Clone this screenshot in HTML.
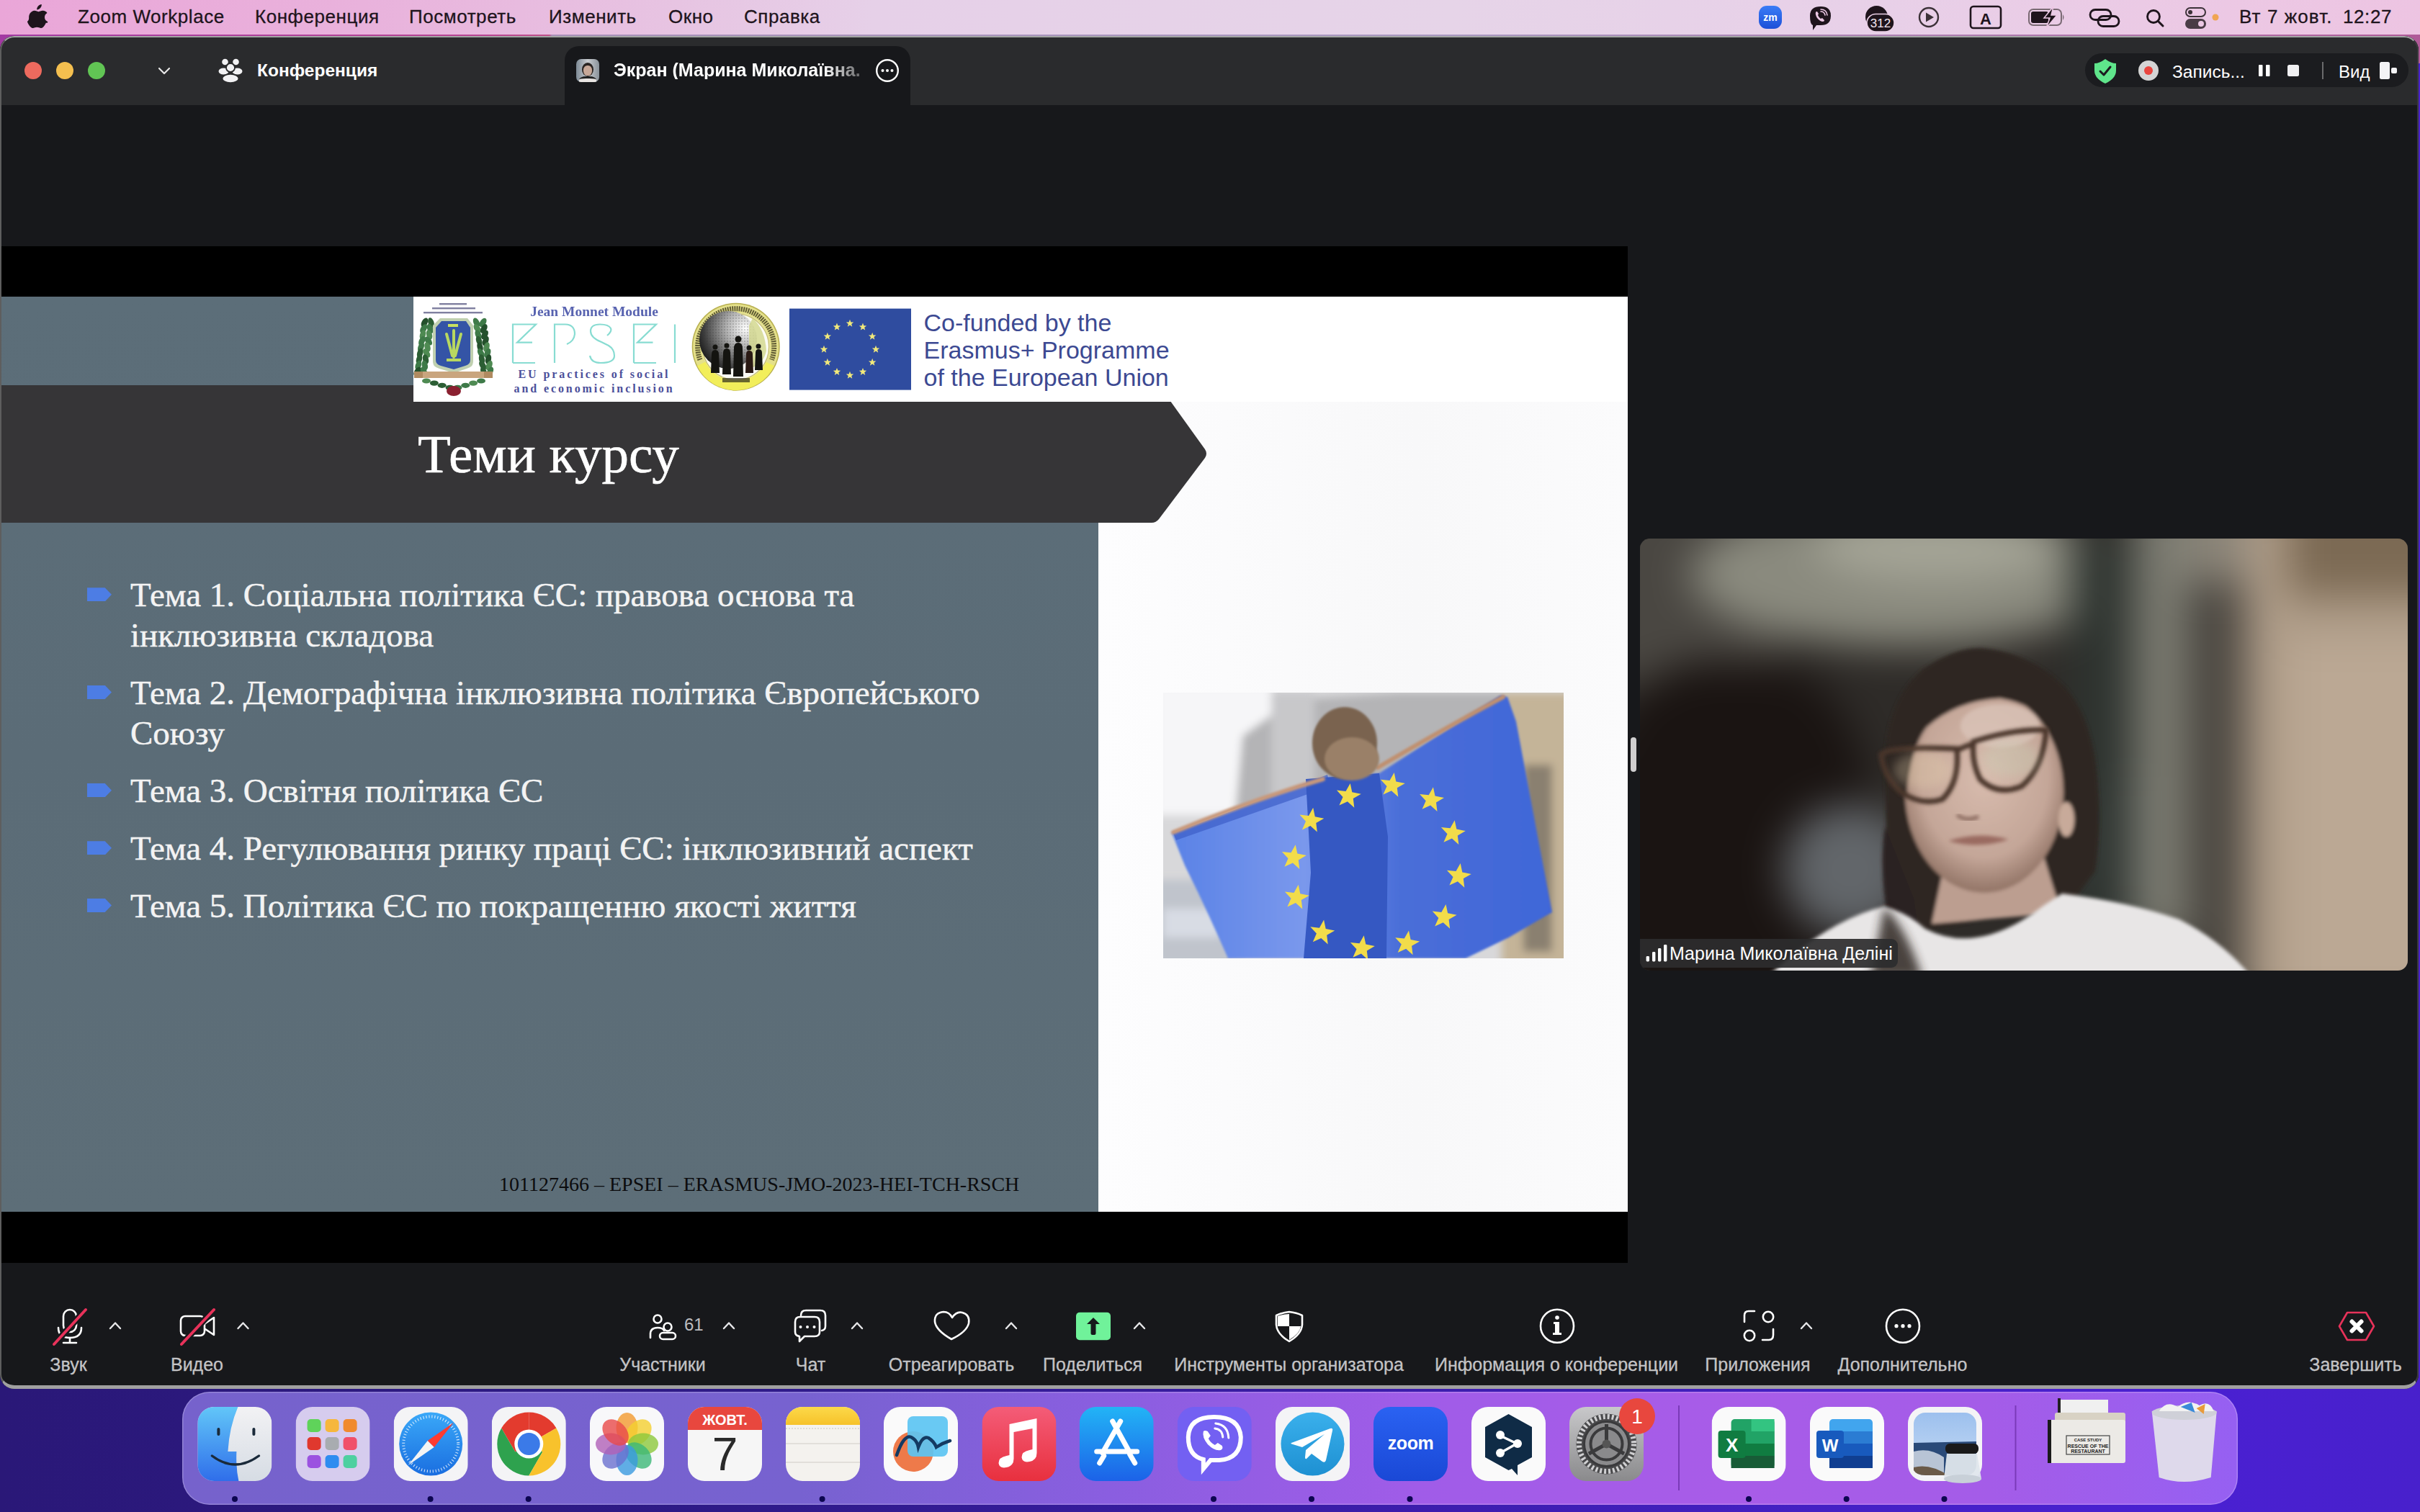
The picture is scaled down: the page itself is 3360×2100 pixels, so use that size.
<!DOCTYPE html>
<html><head><meta charset="utf-8">
<style>
*{box-sizing:border-box;margin:0;padding:0}
html,body{width:3360px;height:2100px;overflow:hidden}
body{position:relative;font-family:"Liberation Sans",sans-serif;
background:linear-gradient(90deg,#2a1878 0%,#2e1a88 30%,#3a1ca8 55%,#4420c4 75%,#4a20d2 90%,#4820cc 100%)}
.a{position:absolute}
svg{position:absolute;overflow:visible}
#menubar{left:0;top:0;width:3360px;height:48px;background:linear-gradient(90deg,#eaa6d8 0%,#e9b2dc 15%,#e7c4e2 28%,#e6d0e8 36%,#e6d4e8 60%,#e8d0e8 78%,#ecc8e4 92%,#edc4e2 100%)}
#mstrip{left:0;top:48px;width:3360px;height:40px;background:linear-gradient(90deg,#a23aa2 0%,#b84492 20%,#c0508a 22.7%,#a890b8 22.8%,#a898c0 60%,#b070a8 90%,#b05a98 100%)}
.mi{position:absolute;top:10px;font-size:26px;line-height:26px;color:#1e141c;letter-spacing:0.55px;white-space:nowrap;-webkit-text-stroke:0.3px #1e141c}
#win{left:0;top:50px;width:3358px;height:1879px;border-radius:20px;background:#17181b;overflow:hidden}
#winb{left:0;top:50px;width:3358px;height:1879px;border-radius:20px;border:2px solid #a3a5a4;border-left-color:#5e5e5e;border-right-color:#3a3a3c;border-bottom:5px solid #a0a0a0;pointer-events:none}
#tabbar{left:0;top:0;width:3358px;height:96px;background:#2a2b2d}
.tl{position:absolute;font-size:25px;line-height:25px;color:#fff;font-weight:700;white-space:nowrap}
.lbl{position:absolute;top:1883px;width:400px;margin-left:-200px;text-align:center;font-size:25px;line-height:25px;color:#c3c3c5;white-space:nowrap;-webkit-text-stroke:0.3px #c3c3c5}
.chev{position:absolute}
#slide{left:0;top:412px;width:2260px;height:1271px;background:#fbfbfc;overflow:hidden}
.ser{font-family:"Liberation Serif",serif;position:absolute;white-space:nowrap}
.bt{font-size:47px;line-height:56px;color:#f3f3f3;-webkit-text-stroke:0.5px #f3f3f3}
.bul{position:absolute;left:120.6px;width:34.4px;height:19.2px;background:#4d7de4;clip-path:polygon(0 0,73% 0,100% 50%,73% 100%,0 100%)}
.dockic{position:absolute;top:1954px;width:103px;height:103px;border-radius:23px;overflow:hidden}
.dot{position:absolute;top:2078px;width:8px;height:8px;border-radius:50%;background:#0c0650}
</style></head>
<body>
<!-- MENU BAR -->
<div id="menubar" class="a"></div>
<div id="mstrip" class="a"></div>
<svg style="left:40px;top:6px" width="27" height="33" viewBox="0 0 170 210"><path fill="#1e141c" d="M150.4 164.6c-3.1 7.2-6.8 13.8-11.1 19.9-5.8 8.4-10.6 14.2-14.3 17.4-5.7 5.3-11.9 8-18.5 8.1-4.7 0-10.4-1.3-17.1-4.1-6.7-2.7-12.8-4.1-18.5-4.1-5.9 0-12.2 1.4-19 4.1-6.8 2.8-12.3 4.2-16.4 4.3-6.4.3-12.7-2.5-19-8.4-4-3.5-9.1-9.5-15.1-18-6.5-9.1-11.8-19.7-16-31.8C1.6 139 0 127.1 0 115.6c0-13.2 2.9-24.6 8.6-34.1 4.5-7.7 10.5-13.8 18-18.2 7.5-4.5 15.6-6.7 24.3-6.9 4.8 0 11 1.5 18.8 4.4 7.8 2.9 12.7 4.4 14.9 4.4 1.6 0 7.2-1.7 16.6-5.2 8.9-3.2 16.4-4.5 22.6-4 16.7 1.3 29.3 7.9 37.6 19.8-15 9.1-22.4 21.8-22.2 38.1.1 12.7 4.8 23.3 13.9 31.6 4.1 3.9 8.7 6.9 13.8 9.1-1.1 3.2-2.3 6.3-3.5 9.3zM112.1 4c0 9.9-3.6 19.2-10.9 27.7-8.7 10.2-19.3 16.1-30.8 15.2-.1-1.2-.2-2.4-.2-3.7 0-9.5 4.1-19.7 11.5-28 3.7-4.2 8.3-7.7 14-10.6C101.4 1.8 106.7.3 111.7 0c.1 1.3.2 2.7.2 4z"/></svg>
<div class="mi" style="left:108px">Zoom Workplace</div>
<div class="mi" style="left:354px">Конференция</div>
<div class="mi" style="left:568px">Посмотреть</div>
<div class="mi" style="left:762px">Изменить</div>
<div class="mi" style="left:928px">Окно</div>
<div class="mi" style="left:1033px">Справка</div>
<div class="mi" style="left:3109px;letter-spacing:1.1px">Вт 7 жовт.</div>
<div class="mi" style="left:3253px;letter-spacing:0.6px">12:27</div>

<svg style="left:2440px;top:6px" width="700" height="40">
  <defs><linearGradient id="zmg" x1="0" y1="0" x2="0" y2="1"><stop offset="0" stop-color="#3a7cf6"/><stop offset="1" stop-color="#1c50d8"/></linearGradient></defs>
  <rect x="2" y="2" width="32" height="32" rx="11" fill="url(#zmg)"/>
  <text x="18" y="23" font-family="Liberation Sans" font-size="14" font-weight="700" fill="#fff" text-anchor="middle">zm</text>
  <!-- viber -->
  <path d="M88 3 Q102 3 102 16 Q102 29 88 29 L82 29 L77 36 L77 29 Q73 28 73 16 Q73 3 88 3Z" fill="#1e141c"/>
  <path d="M81 11 Q80 14 83 19 Q87 24 91 24 Q93 24 93 22 L90 19 L88 20 Q85 18 84 15 L85 13 L83 10 Q81 10 81 11Z" fill="#ecc8e4"/>
  <path d="M88 10 Q93 10 94 15 M88 7 Q96 7 97 15" fill="none" stroke="#ecc8e4" stroke-width="1.6" stroke-linecap="round"/>
  <!-- cloud 312 -->
  <circle cx="165.5" cy="17.5" r="15.5" fill="#1e141c"/>
  <rect x="152" y="13.5" width="38" height="24.5" rx="12.2" fill="#1e141c" stroke="#ead0e6" stroke-width="1.6"/>
  <text x="171" y="32" font-family="Liberation Sans" font-size="17" fill="#f4e8f2" text-anchor="middle">312</text>
  <!-- play -->
  <circle cx="238" cy="18" r="13" fill="none" stroke="#3c3238" stroke-width="2.4"/>
  <path d="M234 11.5 L245 18 L234 24.5Z" fill="#3c3238"/>
  <!-- A box -->
  <rect x="296" y="3" width="42" height="30" rx="4" fill="none" stroke="#1e141c" stroke-width="2.6"/>
  <text x="317" y="28" font-family="Liberation Sans" font-size="22" font-weight="700" fill="#1e141c" text-anchor="middle">A</text>
  <!-- battery -->
  <rect x="377" y="7" width="45" height="22" rx="6" fill="none" stroke="#7a6a74" stroke-width="2"/>
  <rect x="380" y="10" width="24" height="16" rx="3" fill="#1e141c"/>
  <path d="M424 14 Q427 18 424 22Z" fill="#7a6a74"/>
  <path d="M411 3 L398 19 L406 19 L401 33 L416 15 L408 15Z" fill="#1e141c" stroke="#ecc8e4" stroke-width="1.5"/>
  <!-- link -->
  <rect x="462" y="7.5" width="29" height="14" rx="7" fill="none" stroke="#1e141c" stroke-width="2.8"/>
  <rect x="473" y="16.5" width="29" height="14" rx="7" fill="none" stroke="#1e141c" stroke-width="2.8"/>
  <!-- search -->
  <circle cx="550" cy="17" r="8.5" fill="none" stroke="#1e141c" stroke-width="2.8"/>
  <line x1="556.5" y1="23.5" x2="563" y2="30" stroke="#1e141c" stroke-width="3" stroke-linecap="round"/>
  <!-- toggles -->
  <rect x="595" y="5" width="27" height="12" rx="6" fill="none" stroke="#3c3238" stroke-width="2"/>
  <circle cx="601" cy="11" r="3" fill="#3c3238"/>
  <rect x="594" y="20" width="29" height="14" rx="7" fill="#4a3c46"/>
  <circle cx="616" cy="27" r="4" fill="#ecc8e4"/>
  <circle cx="636" cy="18" r="4.5" fill="#f0a552"/>
</svg>


<!-- WINDOW -->
<div id="win" class="a">
  <div id="tabbar" class="a"></div>

  <svg style="left:0;top:0" width="400" height="96">
    <circle cx="46" cy="48" r="12" fill="#ed6a5e"/>
    <circle cx="90" cy="48" r="12" fill="#f4bf4f"/>
    <circle cx="134" cy="48" r="12" fill="#61c554"/>
    <polyline points="221,45 228,52 235,45" fill="none" stroke="#e8e8e8" stroke-width="2.2" stroke-linecap="round" stroke-linejoin="round"/>
    <g fill="#f2f2f4">
      <circle cx="312.5" cy="36" r="4.3"/><circle cx="327.5" cy="36" r="4.3"/>
      <ellipse cx="310.5" cy="49" rx="7" ry="4.6"/><ellipse cx="329.5" cy="49" rx="7" ry="4.6"/>
      <circle cx="320" cy="44" r="6" stroke="#2a2b2d" stroke-width="1.8"/>
      <ellipse cx="320" cy="59" rx="11.5" ry="6.2" stroke="#2a2b2d" stroke-width="1.8"/>
    </g>
  </svg>
  <div class="tl" style="left:357px;top:35px;font-size:24.5px">Конференция</div>
  <div class="a" style="left:784px;top:14px;width:480px;height:90px;background:#17181b;border-radius:20px 20px 0 0"></div>
  <div class="a" style="left:800px;top:32px;width:32px;height:32px;border-radius:7px;overflow:hidden;background:linear-gradient(90deg,#7d8a96,#c9ccd0 50%,#8a929a)">
    <div class="a" style="left:8px;top:5px;width:16px;height:19px;border-radius:50%;background:#2a2422"></div>
    <div class="a" style="left:10px;top:9px;width:12px;height:14px;border-radius:45%;background:#c8a898"></div>
    <div class="a" style="left:4px;top:24px;width:24px;height:12px;border-radius:40% 40% 0 0;background:#e8e4e2;border-top:3px solid #222"></div>
  </div>
  <div class="tl" style="left:852px;top:35px;width:345px;overflow:hidden;-webkit-mask-image:linear-gradient(90deg,#000 85%,rgba(0,0,0,0.3) 100%)">Экран (Марина Миколаївна.</div>
  <svg style="left:1212px;top:28px" width="40" height="40">
    <circle cx="20" cy="20" r="14.8" fill="none" stroke="#fff" stroke-width="2.4"/>
    <circle cx="13.5" cy="20" r="2" fill="#fff"/><circle cx="20" cy="20" r="2" fill="#fff"/><circle cx="26.5" cy="20" r="2" fill="#fff"/>
  </svg>
  <div class="a" style="left:2895px;top:24px;width:449px;height:47px;border-radius:24px;background:#1b1c1f"></div>
  <svg style="left:2900px;top:28px" width="450" height="40">
    <path d="M23 4 Q31 10 38 10 L38 20 Q38 31 23 38 Q8 31 8 20 L8 10 Q15 10 23 4Z" fill="#5fe58b"/>
    <polyline points="16,21 21,26 30,15" fill="none" stroke="#1b1c1f" stroke-width="3" stroke-linecap="round" stroke-linejoin="round"/>
    <circle cx="83" cy="20" r="14" fill="#d4d4d4"/><circle cx="83" cy="20" r="6" fill="#e9463f"/>
    <rect x="236" y="12" width="5.5" height="16" rx="1" fill="#fff"/><rect x="246" y="12" width="5.5" height="16" rx="1" fill="#fff"/>
    <rect x="276" y="12" width="16" height="16" rx="2.5" fill="#f0f0f2"/>
    <rect x="324" y="8" width="2" height="24" fill="#6a6a6c"/>
    <rect x="404" y="8" width="14" height="24" rx="2.5" fill="#f4f4f6"/>
    <rect x="420" y="16" width="8" height="8" rx="2" fill="#f4f4f6"/>
  </svg>
  <div class="tl" style="left:3016px;top:37px;font-weight:400;font-size:24.5px">Запись...</div>
  <div class="tl" style="left:3247px;top:37px;font-weight:400;font-size:24px">Вид</div>

</div>

<div class="a" style="left:2px;top:342px;width:2258px;height:1412px;background:#000"></div>
<div id="slide" class="a">
  <div class="a" style="left:0;top:0;width:1525px;height:1271px;background:linear-gradient(180deg,#5c6e79 0%,#5b6c77 50%,#5d6e78 100%)"></div>
  <div class="a" style="left:1525px;top:0;width:735px;height:1271px;background:linear-gradient(90deg,#fdfdfe,#f8f8f9 60%,#fbfbfc)"></div>
  <svg style="left:0;top:0" width="2260" height="400">
    <path d="M0 123 L1604 123 Q1609 123 1612 127 L1673 212 Q1677 218 1673 224 L1609 309 Q1605 314 1599 314 L0 314Z" fill="#363537"/>
  </svg>
  <div class="a" style="left:574px;top:0;width:1686px;height:146px;background:#fff"></div>
  <div class="ser" style="left:580px;top:181px;font-size:75px;line-height:75px;color:#fff;-webkit-text-stroke:0.6px #fff">Теми курсу</div>

  <svg style="left:0;top:0" width="2260" height="146">
    <defs>
      <radialGradient id="globe" cx="0.45" cy="0.4" r="0.6"><stop offset="0" stop-color="#f4f4f4"/><stop offset="0.6" stop-color="#9a9a9a"/><stop offset="1" stop-color="#3a3a3a"/></radialGradient>
      <pattern id="dots" width="4" height="4" patternUnits="userSpaceOnUse"><circle cx="2" cy="2" r="1.1" fill="#333"/></pattern>
    </defs>
    <!-- crest -->
    <g opacity="0.85">
      <rect x="610" y="9" width="38" height="2.4" fill="#6a6a90"/>
      <rect x="600" y="15" width="60" height="2.4" fill="#6a6a90"/>
      <rect x="588" y="21" width="82" height="2.4" fill="#6a6a90"/>
    </g>
    <ellipse cx="589.5" cy="36.0" rx="4" ry="7" fill="#24502c" transform="rotate(28 589.5 36.0)"/><ellipse cx="598.5" cy="36.0" rx="4" ry="7" fill="#2c5e34" transform="rotate(-18 598.5 36.0)"/><ellipse cx="588.2" cy="44.5" rx="4" ry="7" fill="#3e7a48" transform="rotate(33 588.2 44.5)"/><ellipse cx="597.2" cy="44.5" rx="4" ry="7" fill="#3e7a48" transform="rotate(-21 597.2 44.5)"/><ellipse cx="587.0" cy="53.0" rx="4" ry="7" fill="#4e8a52" transform="rotate(16 587.0 53.0)"/><ellipse cx="596.0" cy="53.0" rx="4" ry="7" fill="#4e8a52" transform="rotate(-16 596.0 53.0)"/><ellipse cx="585.8" cy="61.5" rx="4" ry="7" fill="#3e7a48" transform="rotate(26 585.8 61.5)"/><ellipse cx="594.8" cy="61.5" rx="4" ry="7" fill="#3e7a48" transform="rotate(-37 594.8 61.5)"/><ellipse cx="584.5" cy="70.0" rx="4" ry="7" fill="#3e7a48" transform="rotate(23 584.5 70.0)"/><ellipse cx="593.5" cy="70.0" rx="4" ry="7" fill="#4e8a52" transform="rotate(-15 593.5 70.0)"/><ellipse cx="583.2" cy="78.5" rx="4" ry="7" fill="#2c5e34" transform="rotate(17 583.2 78.5)"/><ellipse cx="592.2" cy="78.5" rx="4" ry="7" fill="#4e8a52" transform="rotate(-34 592.2 78.5)"/><ellipse cx="582.0" cy="87.0" rx="4" ry="7" fill="#2c5e34" transform="rotate(16 582.0 87.0)"/><ellipse cx="591.0" cy="87.0" rx="4" ry="7" fill="#2c5e34" transform="rotate(-14 591.0 87.0)"/><ellipse cx="580.8" cy="95.5" rx="4" ry="7" fill="#3e7a48" transform="rotate(18 580.8 95.5)"/><ellipse cx="589.8" cy="95.5" rx="4" ry="7" fill="#3e7a48" transform="rotate(-14 589.8 95.5)"/><ellipse cx="579.5" cy="104.0" rx="4" ry="7" fill="#24502c" transform="rotate(34 579.5 104.0)"/><ellipse cx="588.5" cy="104.0" rx="4" ry="7" fill="#3e7a48" transform="rotate(-29 588.5 104.0)"/><ellipse cx="661.5" cy="36.0" rx="4" ry="7" fill="#3e7a48" transform="rotate(-26 661.5 36.0)"/><ellipse cx="670.5" cy="36.0" rx="4" ry="7" fill="#3e7a48" transform="rotate(33 670.5 36.0)"/><ellipse cx="662.8" cy="44.5" rx="4" ry="7" fill="#4e8a52" transform="rotate(-36 662.8 44.5)"/><ellipse cx="671.8" cy="44.5" rx="4" ry="7" fill="#24502c" transform="rotate(30 671.8 44.5)"/><ellipse cx="664.0" cy="53.0" rx="4" ry="7" fill="#3e7a48" transform="rotate(-23 664.0 53.0)"/><ellipse cx="673.0" cy="53.0" rx="4" ry="7" fill="#24502c" transform="rotate(31 673.0 53.0)"/><ellipse cx="665.2" cy="61.5" rx="4" ry="7" fill="#2c5e34" transform="rotate(-20 665.2 61.5)"/><ellipse cx="674.2" cy="61.5" rx="4" ry="7" fill="#24502c" transform="rotate(23 674.2 61.5)"/><ellipse cx="666.5" cy="70.0" rx="4" ry="7" fill="#24502c" transform="rotate(-15 666.5 70.0)"/><ellipse cx="675.5" cy="70.0" rx="4" ry="7" fill="#4e8a52" transform="rotate(17 675.5 70.0)"/><ellipse cx="667.8" cy="78.5" rx="4" ry="7" fill="#3e7a48" transform="rotate(-30 667.8 78.5)"/><ellipse cx="676.8" cy="78.5" rx="4" ry="7" fill="#3e7a48" transform="rotate(25 676.8 78.5)"/><ellipse cx="669.0" cy="87.0" rx="4" ry="7" fill="#2c5e34" transform="rotate(-14 669.0 87.0)"/><ellipse cx="678.0" cy="87.0" rx="4" ry="7" fill="#24502c" transform="rotate(14 678.0 87.0)"/><ellipse cx="670.2" cy="95.5" rx="4" ry="7" fill="#2c5e34" transform="rotate(-33 670.2 95.5)"/><ellipse cx="679.2" cy="95.5" rx="4" ry="7" fill="#4e8a52" transform="rotate(24 679.2 95.5)"/><ellipse cx="671.5" cy="104.0" rx="4" ry="7" fill="#2c5e34" transform="rotate(-22 671.5 104.0)"/><ellipse cx="680.5" cy="104.0" rx="4" ry="7" fill="#3e7a48" transform="rotate(26 680.5 104.0)"/>
    <path d="M611 30 L649 30 L657 40 L657 90 Q657 98 648 100 L630 106 L610 100 Q601 98 601 90 L601 40Z" fill="#c0d0b0"/>
    <path d="M613 34 L647 34 L653 43 L653 88 Q653 94 646 96 L630 101 L612 96 Q605 94 605 88 L605 43Z" fill="#3454a6"/>
    <path d="M620 52 L628 82 M640 52 L632 82 M630 47 L630 84" stroke="#b8d860" stroke-width="4" stroke-linecap="round"/>
    <rect x="620" y="86" width="20" height="4" fill="#b8d860"/>
    <rect x="622" y="38" width="14" height="4" fill="#c8e060"/>
    <rect x="575" y="104" width="109" height="9" fill="#c9a57e"/>
    <rect x="575" y="104" width="12" height="9" fill="#b08a60"/><rect x="672" y="104" width="12" height="9" fill="#b08a60"/>
    <ellipse cx="592.0" cy="117.0" rx="6" ry="3.6" fill="#4e8a52"/><ellipse cx="602.9" cy="120.1" rx="6" ry="3.6" fill="#2c5e34"/><ellipse cx="613.7" cy="123.3" rx="6" ry="3.6" fill="#2c5e34"/><ellipse cx="624.6" cy="126.4" rx="6" ry="3.6" fill="#2c5e34"/><ellipse cx="635.4" cy="126.4" rx="6" ry="3.6" fill="#3e7a48"/><ellipse cx="646.3" cy="123.3" rx="6" ry="3.6" fill="#3e7a48"/><ellipse cx="657.1" cy="120.1" rx="6" ry="3.6" fill="#4e8a52"/><ellipse cx="668.0" cy="117.0" rx="6" ry="3.6" fill="#3e7a48"/>
    <ellipse cx="630" cy="131" rx="10" ry="7" fill="#8a2030"/>
    <!-- Jean Monnet Module -->
    <text x="825" y="27" font-family="Liberation Serif" font-weight="700" font-size="19.5" fill="#4a56aa" text-anchor="middle" opacity="0.92">Jean Monnet Module</text>
    <!-- EPSEI thin letters -->
    <g fill="none" stroke="#88dcd2" stroke-width="2.2" stroke-linecap="butt" stroke-linejoin="miter">
      <path d="M712 92 L712 38.5 L744 38.5 L718 63.6 L739 63.6 M712 92 L743 92"/>
      <path d="M770 92 L770 38.5 L785 38.5 Q798 39 798 52 Q797 62 787 66"/>
      <path d="M843 54 Q850 48 848 44 Q845 38.5 833 38.5 Q820 38.5 820 48 Q820 57 835 63 L845 68 Q853 73 853 82 Q853 92 834 92 Q821 92 819 82"/>
      <path d="M880 92 L880 38.5 L911 38.5 L885 63.6 L906.5 63.6 M880 92 L911 92"/>
      <path d="M937 38.5 L937 92"/>
    </g>
    <text x="825" y="113" font-family="Liberation Serif" font-weight="700" font-size="16" letter-spacing="2.9" fill="#4b4f9a" text-anchor="middle">EU practices of social</text>
    <text x="825" y="132.5" font-family="Liberation Serif" font-weight="700" font-size="16" letter-spacing="2.9" fill="#4b4f9a" text-anchor="middle">and economic inclusion</text>
    <!-- circle logo -->
    <circle cx="1021.7" cy="69.7" r="61" fill="#b8b050"/>
    <circle cx="1021.7" cy="69.7" r="59.5" fill="#e4e08a"/>
    <path d="M968 96 A59 59 0 0 0 1075 96 L1062 90 A46 46 0 0 1 981 90Z" fill="#f2ee5a"/>
    <path d="M971.9 87.8 A53 53 0 1 1 1071.5 87.8" fill="none" stroke="#3e3a1e" stroke-width="7" stroke-dasharray="2 1.2" opacity="0.8"/>
    <circle cx="1021.7" cy="69.7" r="47" fill="#fbfbf4"/>
    <circle cx="1021.7" cy="69.7" r="46" fill="none" stroke="#c8c070" stroke-width="1.5"/>
    <radialGradient id="glob2" cx="0.8" cy="0.3" r="0.95"><stop offset="0" stop-color="#ffffff"/><stop offset="0.35" stop-color="#b0b0b0"/><stop offset="0.75" stop-color="#404040"/><stop offset="1" stop-color="#080808"/></radialGradient>
    <circle cx="1011" cy="60" r="40" fill="url(#glob2)"/>
    <circle cx="1011" cy="60" r="40" fill="url(#dots)" opacity="0.25"/>
    <path d="M1045 30 Q1062 45 1064 75 Q1060 95 1040 100 L1040 40Z" fill="#d4d890" opacity="0.85"/>
    <g fill="#141410">
      <path d="M988 80 Q988 74 993 74 Q998 74 998 80 L999 106 L987 106Z"/><circle cx="993" cy="70" r="3.5"/>
      <path d="M1004 78 Q1004 72 1009 72 Q1014 72 1014 78 L1015 108 L1003 108Z"/><circle cx="1009" cy="68" r="3.5"/>
      <path d="M1019 72 Q1019 64 1025 64 Q1031 64 1031 72 L1032 111 L1018 111Z"/><circle cx="1025" cy="59" r="4.5"/>
      <path d="M1036 80 Q1036 75 1040 75 Q1045 75 1045 80 L1046 106 L1035 106Z" fill="#2a1a14"/><circle cx="1040" cy="71" r="3.5"/>
      <path d="M1049 78 Q1049 73 1053 73 Q1058 73 1058 78 L1059 102 L1048 102Z"/><circle cx="1053" cy="69" r="3.5"/>
    </g>
    <rect x="1003" y="113" width="38" height="6" fill="#3a3820" opacity="0.75"/>
    <!-- EU flag -->
    <rect x="1096" y="16.6" width="169" height="113" fill="#2f4c9f"/>
    <polygon points="1216.0,67.8 1217.4,71.4 1221.2,71.6 1218.2,74.0 1219.2,77.7 1216.0,75.6 1212.8,77.7 1213.8,74.0 1210.8,71.6 1214.6,71.4" fill="#f2e97a"/><polygon points="1211.2,85.8 1212.5,89.4 1216.4,89.6 1213.4,92.0 1214.4,95.7 1211.2,93.6 1207.9,95.7 1209.0,92.0 1205.9,89.6 1209.8,89.4" fill="#f2e97a"/><polygon points="1198.0,99.0 1199.4,102.6 1203.2,102.8 1200.2,105.2 1201.2,108.9 1198.0,106.8 1194.8,108.9 1195.8,105.2 1192.8,102.8 1196.6,102.6" fill="#f2e97a"/><polygon points="1180.0,103.8 1181.4,107.4 1185.2,107.6 1182.2,110.0 1183.2,113.7 1180.0,111.6 1176.8,113.7 1177.8,110.0 1174.8,107.6 1178.6,107.4" fill="#f2e97a"/><polygon points="1162.0,99.0 1163.4,102.6 1167.2,102.8 1164.2,105.2 1165.2,108.9 1162.0,106.8 1158.8,108.9 1159.8,105.2 1156.8,102.8 1160.6,102.6" fill="#f2e97a"/><polygon points="1148.8,85.8 1150.2,89.4 1154.1,89.6 1151.0,92.0 1152.1,95.7 1148.8,93.6 1145.6,95.7 1146.6,92.0 1143.6,89.6 1147.5,89.4" fill="#f2e97a"/><polygon points="1144.0,67.8 1145.4,71.4 1149.2,71.6 1146.2,74.0 1147.2,77.7 1144.0,75.6 1140.8,77.7 1141.8,74.0 1138.8,71.6 1142.6,71.4" fill="#f2e97a"/><polygon points="1148.8,49.8 1150.2,53.4 1154.1,53.6 1151.0,56.0 1152.1,59.7 1148.8,57.6 1145.6,59.7 1146.6,56.0 1143.6,53.6 1147.5,53.4" fill="#f2e97a"/><polygon points="1162.0,36.6 1163.4,40.3 1167.2,40.4 1164.2,42.8 1165.2,46.6 1162.0,44.4 1158.8,46.6 1159.8,42.8 1156.8,40.4 1160.6,40.3" fill="#f2e97a"/><polygon points="1180.0,31.8 1181.4,35.4 1185.2,35.6 1182.2,38.0 1183.2,41.7 1180.0,39.6 1176.8,41.7 1177.8,38.0 1174.8,35.6 1178.6,35.4" fill="#f2e97a"/><polygon points="1198.0,36.6 1199.4,40.3 1203.2,40.4 1200.2,42.8 1201.2,46.6 1198.0,44.4 1194.8,46.6 1195.8,42.8 1192.8,40.4 1196.6,40.3" fill="#f2e97a"/><polygon points="1211.2,49.8 1212.5,53.4 1216.4,53.6 1213.4,56.0 1214.4,59.7 1211.2,57.6 1207.9,59.7 1209.0,56.0 1205.9,53.6 1209.8,53.4" fill="#f2e97a"/>
    <text x="1282.5" y="48" font-family="Liberation Sans" font-size="34" fill="#3c4992">Co-funded by the</text>
    <text x="1282.5" y="86.2" font-family="Liberation Sans" font-size="34" fill="#3c4992">Erasmus+ Programme</text>
    <text x="1282.5" y="124" font-family="Liberation Sans" font-size="34" fill="#3c4992">of the European Union</text>
  </svg>

  <div class="bul" style="top:404.2px"></div>
  <div class="ser bt" style="left:181px;top:386px">Тема 1. Соціальна політика ЄС: правова основа та<br>інклюзивна складова</div>
  <div class="bul" style="top:539.8px"></div>
  <div class="ser bt" style="left:181px;top:521.5px">Тема 2. Демографічна інклюзивна політика Європейського<br>Союзу</div>
  <div class="bul" style="top:676.1px"></div>
  <div class="ser bt" style="left:181px;top:658px">Тема 3. Освітня політика ЄС</div>
  <div class="bul" style="top:756.2px"></div>
  <div class="ser bt" style="left:181px;top:738px">Тема 4. Регулювання ринку праці ЄС: інклюзивний аспект</div>
  <div class="bul" style="top:835.8px"></div>
  <div class="ser bt" style="left:181px;top:817.5px">Тема 5. Політика ЄС по покращенню якості життя</div>
  <div class="ser" style="left:693px;top:1219px;font-size:28px;line-height:28px;color:#0c0c0e">101127466 – EPSEI – ERASMUS-JMO-2023-HEI-TCH-RSCH</div>

  <svg style="left:1615px;top:550px" width="556" height="369" viewBox="0 0 556 369">
    <defs>
      <filter id="bl6" x="-20%" y="-20%" width="140%" height="140%"><feGaussianBlur stdDeviation="6"/></filter>
      <filter id="bl2"><feGaussianBlur stdDeviation="1.5"/></filter>
      <linearGradient id="flagg" x1="0" y1="0" x2="1" y2="0"><stop offset="0" stop-color="#5a82e6"/><stop offset="0.35" stop-color="#7a98ec"/><stop offset="0.6" stop-color="#4a6ed8"/><stop offset="1" stop-color="#3f66d8"/></linearGradient>
      <clipPath id="phc"><rect width="556" height="369"/></clipPath>
    </defs>
    <g clip-path="url(#phc)">
      <rect width="556" height="369" fill="#d8d8da"/>
      <g filter="url(#bl6)">
        <rect x="-10" y="-10" width="160" height="180" fill="#f6f6f8"/>
        <path d="M100 170 L110 60 L180 10 L330 0 L480 0 L480 200 L100 230Z" fill="#b4b4b6"/>
        <rect x="150" y="0" width="60" height="200" fill="#c8c8ca"/>
        <rect x="470" y="0" width="100" height="380" fill="#c4b498"/>
        <rect x="500" y="100" width="40" height="260" fill="#8a8070"/>
        <rect x="-10" y="260" width="120" height="120" fill="#c0c4cc"/>
        <rect x="0" y="300" width="80" height="40" fill="#d8dce4"/>
      </g>
      <path d="M12 195 L140 150 L228 117 L300 112 L468 4 L478 6 L490 40 L520 200 L540 305 L480 340 L420 369 L90 369 Q60 300 30 240Z" fill="url(#flagg)" filter="url(#bl2)"/>
      <path d="M14 195 L228 114 L232 130 L18 205Z" fill="#3d5ec8" opacity="0.7"/>
      <path d="M198 120 L300 112 L312 200 L310 369 L195 369 L205 250Z" fill="#3558c2"/>
      <path d="M14 194 Q120 150 222 120" stroke="#c8987a" stroke-width="6" fill="none" stroke-linecap="round" filter="url(#bl2)"/>
      <path d="M298 104 Q390 50 472 6" stroke="#c09070" stroke-width="6" fill="none" stroke-linecap="round" filter="url(#bl2)"/>
      <ellipse cx="252" cy="70" rx="45" ry="50" fill="#7a6450" filter="url(#bl2)"/>
      <ellipse cx="262" cy="92" rx="38" ry="30" fill="#9a8068" filter="url(#bl2)"/>
      <polygon points="259.7,125.9 262.3,138.3 274.8,140.8 263.8,147.1 265.3,159.7 255.9,151.2 244.4,156.5 249.5,144.9 240.9,135.6 253.5,137.0" fill="#f2dc4a"/><polygon points="320.7,111.0 323.3,123.4 335.8,125.9 324.8,132.2 326.3,144.8 316.9,136.3 305.4,141.6 310.5,130.0 301.9,120.7 314.5,122.1" fill="#f2dc4a"/><polygon points="374.9,131.2 377.5,143.6 390.0,146.1 379.0,152.4 380.5,165.0 371.1,156.5 359.6,161.8 364.7,150.2 356.1,140.9 368.7,142.3" fill="#f2dc4a"/><polygon points="404.7,177.2 407.3,189.6 419.8,192.1 408.8,198.4 410.3,211.0 400.9,202.5 389.4,207.8 394.5,196.2 385.9,186.9 398.5,188.3" fill="#f2dc4a"/><polygon points="412.7,237.0 415.3,249.4 427.8,251.9 416.8,258.2 418.3,270.8 408.9,262.3 397.4,267.6 402.5,256.0 393.9,246.7 406.5,248.1" fill="#f2dc4a"/><polygon points="392.5,293.9 395.1,306.3 407.6,308.8 396.6,315.1 398.1,327.7 388.7,319.2 377.2,324.5 382.3,312.9 373.7,303.6 386.3,305.0" fill="#f2dc4a"/><polygon points="341.0,330.5 343.6,342.9 356.1,345.4 345.1,351.7 346.6,364.3 337.2,355.8 325.7,361.1 330.8,349.5 322.2,340.2 334.8,341.6" fill="#f2dc4a"/><polygon points="278.7,337.2 281.3,349.6 293.8,352.1 282.8,358.4 284.3,371.0 274.9,362.5 263.4,367.8 268.5,356.2 259.9,346.9 272.5,348.3" fill="#f2dc4a"/><polygon points="223.1,315.6 225.7,328.0 238.2,330.5 227.2,336.8 228.7,349.4 219.3,340.9 207.8,346.2 212.9,334.6 204.3,325.3 216.9,326.7" fill="#f2dc4a"/><polygon points="187.7,266.8 190.3,279.2 202.8,281.7 191.8,288.0 193.3,300.6 183.9,292.1 172.4,297.4 177.5,285.8 168.9,276.5 181.5,277.9" fill="#f2dc4a"/><polygon points="183.7,211.2 186.3,223.6 198.8,226.1 187.8,232.4 189.3,245.0 179.9,236.5 168.4,241.8 173.5,230.2 164.9,220.9 177.5,222.3" fill="#f2dc4a"/><polygon points="208.2,159.8 210.8,172.2 223.3,174.7 212.3,181.0 213.8,193.6 204.4,185.1 192.9,190.4 198.0,178.8 189.4,169.5 202.0,170.9" fill="#f2dc4a"/>
    </g>
  </svg>

</div>


<div class="a" style="left:2264px;top:1024px;width:8px;height:48px;border-radius:4px;background:#cfcfd1"></div>
<div class="a" style="left:2277px;top:748px;width:1066px;height:600px;border-radius:14px;overflow:hidden;background:#3a3733">
  <div class="a" style="left:-60px;top:-60px;width:1186px;height:720px;filter:blur(28px);background:#2e2b28">
    <div class="a" style="left:0;top:0;width:260px;height:260px;background:#4a4742"></div>
    <div class="a" style="left:130px;top:10px;width:600px;height:200px;border-radius:50%;background:#8a8a7e"></div>
    <div class="a" style="left:300px;top:20px;width:340px;height:100px;border-radius:50%;background:#a4a496"></div>
    <div class="a" style="left:0;top:230px;width:380px;height:540px;border-radius:40%;background:#1a1412"></div>
    <div class="a" style="left:260px;top:430px;width:180px;height:180px;border-radius:50%;background:#62666a"></div>
    <div class="a" style="left:640px;top:380px;width:140px;height:200px;border-radius:50%;background:#50565a"></div>
    <div class="a" style="left:660px;top:60px;width:80px;height:600px;background:#2e3430"></div>
    <div class="a" style="left:745px;top:0px;width:75px;height:620px;background:#7c7c72"></div>
    <div class="a" style="left:820px;top:100px;width:80px;height:600px;background:#4a4640"></div>
    <div class="a" style="left:820px;top:0px;width:100px;height:120px;background:#8a8478"></div>
    <div class="a" style="left:900px;top:0;width:300px;height:720px;background:#ae9c88"></div>
    <div class="a" style="left:960px;top:200px;width:240px;height:520px;background:#bba894"></div>
    <div class="a" style="left:960px;top:0;width:260px;height:140px;background:#7c6a54"></div>
  </div>
    <svg style="left:0;top:0" width="1066" height="600" viewBox="0 0 1066 600">
    <defs>
      <filter id="vb40" x="-30%" y="-30%" width="160%" height="160%"><feGaussianBlur stdDeviation="40"/></filter>
      <filter id="vb20" x="-30%" y="-30%" width="160%" height="160%"><feGaussianBlur stdDeviation="18"/></filter>
      <filter id="vb8" x="-30%" y="-30%" width="160%" height="160%"><feGaussianBlur stdDeviation="7"/></filter>
      <filter id="vb3" x="-30%" y="-30%" width="160%" height="160%"><feGaussianBlur stdDeviation="2.5"/></filter>
      <radialGradient id="face" cx="0.5" cy="0.42" r="0.58"><stop offset="0" stop-color="#d8bcae"/><stop offset="0.7" stop-color="#c4a698"/><stop offset="1" stop-color="#927466"/></radialGradient>
    </defs>

    <g filter="url(#vb3)">
    <!-- hair -->
    <path d="M340 310 Q342 225 392 182 Q438 150 475 152 Q542 158 592 208 Q626 250 634 322 Q642 400 632 462 L600 505 L382 548 Q348 475 342 400Z" fill="#2e2622"/>
    <path d="M340 400 Q330 470 350 560 L392 580 L380 500Z" fill="#2a2220"/>
    <!-- neck -->
    <path d="M425 440 L560 440 L585 520 L405 535Z" fill="#bc9e90"/>
    <!-- face -->
    <ellipse cx="478" cy="352" rx="110" ry="140" fill="url(#face)"/>
    <ellipse cx="500" cy="260" rx="55" ry="30" fill="#dcc6ba" opacity="0.7"/>
    <path d="M362 330 Q368 250 420 212 Q480 188 545 205 Q592 230 604 300 L590 282 Q560 232 500 222 Q440 225 398 262 Q376 290 370 360Z" fill="#2e2622"/>
    <path d="M592 300 Q600 380 596 430 L612 440 Q622 360 604 290Z" fill="#2e2622"/>
    <ellipse cx="592" cy="390" rx="11" ry="24" fill="#c8aa9a"/>
    </g>
    <!-- glasses -->
    <g fill="none" stroke="#4a362c" stroke-width="7.5" filter="url(#vb3)">
      <path d="M335 300 Q345 288 440 292 Q444 338 420 362 Q392 372 362 352 Q338 330 335 300Z"/>
      <path d="M463 282 Q520 264 564 266 Q560 318 530 344 Q496 358 472 334 Q460 310 463 282Z"/>
      <path d="M440 294 Q452 288 463 285"/>
    </g>
    <ellipse cx="392" cy="322" rx="40" ry="25" fill="#e8d4b0" opacity="0.3" filter="url(#vb8)"/>
    <ellipse cx="515" cy="306" rx="40" ry="25" fill="#c8d4b8" opacity="0.3" filter="url(#vb8)"/>
    <path d="M440 384 Q455 394 470 386" stroke="#8a6a5e" stroke-width="5" fill="none" filter="url(#vb3)"/>
    <path d="M428 420 Q470 406 512 418 Q470 432 428 420Z" fill="#9a6a60" filter="url(#vb3)"/>
    <!-- shirt -->
    <path d="M176 610 Q260 530 339 511 Q372 520 396 542 Q470 580 560 510 L586 493 Q680 505 749 529 Q810 560 850 610Z" fill="#e8e6e6" filter="url(#vb3)"/>
    <path d="M339 511 Q370 540 392 610 L320 610 Q330 560 339 511Z" fill="#2e2622" opacity="0.85" filter="url(#vb8)"/>
  </svg>
  <div class="a" style="left:0;top:556px;width:358px;height:40px;border-radius:0 9px 9px 0;background:rgba(44,44,46,0.92)"></div>
  <svg style="left:0;top:556px" width="40" height="40">
    <rect x="8.6" y="24" width="4.4" height="7.4" rx="1.4" fill="#fff"/>
    <rect x="17" y="18" width="4.4" height="13.4" rx="1.4" fill="#fff"/>
    <rect x="25" y="13" width="4.4" height="18.4" rx="1.4" fill="#fff"/>
    <rect x="33" y="8" width="4.4" height="23.4" rx="1.4" fill="#fff"/>
  </svg>
  <div class="a" style="left:41px;top:564px;font-size:25px;line-height:25px;color:#fff;white-space:nowrap">Марина Миколаївна Деліні</div>
</div>


<svg style="left:0;top:1790px" width="3360" height="100">
  <g fill="none" stroke="#fff" stroke-width="2.6" stroke-linecap="round" stroke-linejoin="round">
    <!-- mic -->
    <rect x="88" y="29" width="18" height="31" rx="9"/>
    <path d="M81 54 Q81 68 97 68 Q113 68 113 54"/>
    <path d="M97 68 L97 75 M88 75 L106 75"/>
    <!-- video -->
    <rect x="251" y="38" width="33" height="27" rx="6"/>
    <path d="M285 48 L297 40 L297 64 L285 56"/>
    <!-- participants -->
    <circle cx="913" cy="42" r="5.5"/>
    <path d="M903 68 L903 63 Q903 54 913 54 Q920 54 922 58"/>
    <circle cx="927" cy="53" r="5.5"/>
    <rect x="916" y="61" width="22" height="9" rx="4.5"/>
    <!-- chat -->
    <path d="M1112 37 Q1112 30 1119 30 L1139 30 Q1146 30 1146 37 L1146 52 Q1146 57 1141 58"/>
    <path d="M1104 46 Q1104 39 1111 39 L1131 39 Q1138 39 1138 46 L1138 60 Q1138 66 1131 66 L1117 66 L1110 73 L1110 66 Q1104 65 1104 60Z" fill="#17181b"/>
    <!-- heart -->
    <path d="M1321 70 Q1300 58 1298 46 Q1297 33 1310 32 Q1318 32 1322 40 Q1328 31 1336 33 Q1347 36 1345 48 Q1342 60 1321 70Z"/>
    <!-- host shield -->
    <path d="M1790 32 Q1800 33 1808 37 L1808 50 Q1807 63 1790 73 Q1773 63 1772 50 L1772 37 Q1780 33 1790 32Z"/>
    <!-- info -->
    <circle cx="2162" cy="51.7" r="23"/>
    <!-- apps -->
    <path d="M2422 46 L2422 37 Q2422 31 2428 31 L2436 31"/>
    <circle cx="2455" cy="39" r="7.2"/>
    <circle cx="2429" cy="65" r="7.2"/>
    <path d="M2462 56 L2462 64 Q2462 71 2456 71 L2447 71"/>
    <!-- more -->
    <circle cx="2642" cy="51.7" r="23"/>
  </g>
  <g fill="#fff">
    <circle cx="1111.5" cy="53" r="2"/><circle cx="1121" cy="53" r="2"/><circle cx="1130.5" cy="53" r="2"/>
    <path d="M1790 35 L1790 52 L1774 52 L1774 38 Q1782 35 1790 35Z"/>
    <path d="M1790 52 L1806 52 Q1805 62 1790 71Z"/>
    <circle cx="2162" cy="40" r="2.8"/>
    <path d="M2157 46 L2165 46 L2165 61 L2168 61 L2168 64 L2156 64 L2156 61 L2159 61 L2159 49 L2157 49Z"/>
    <circle cx="2633" cy="51.7" r="2.6"/><circle cx="2642" cy="51.7" r="2.6"/><circle cx="2651" cy="51.7" r="2.6"/>
  </g>
  <!-- red slashes -->
  <line x1="75" y1="77" x2="119" y2="29" stroke="#17181b" stroke-width="9" stroke-linecap="round"/><line x1="75" y1="77" x2="119" y2="29" stroke="#e8325a" stroke-width="4" stroke-linecap="round"/>
  <line x1="252" y1="77" x2="297" y2="29" stroke="#17181b" stroke-width="9" stroke-linecap="round"/><line x1="252" y1="77" x2="297" y2="29" stroke="#e8325a" stroke-width="4" stroke-linecap="round"/>
  <!-- share -->
  <rect x="1494" y="32.7" width="48" height="38.5" rx="5" fill="#70f29a"/>
  <path d="M1518 40 L1527 49 L1521.5 49 L1521.5 62 Q1521.5 64 1519.5 64 L1516.5 64 Q1514.5 64 1514.5 62 L1514.5 49 L1509 49Z" fill="#17181b"/>
  <!-- end -->
  <path d="M3259 33 L3285 33 L3296 52 L3285 71 L3259 71 L3248 52Z" fill="none" stroke="#e8325a" stroke-width="2.6" stroke-linejoin="round"/>
  <path d="M3265.5 45.5 L3278.5 58.5 M3278.5 45.5 L3265.5 58.5" stroke="#fff" stroke-width="6" stroke-linecap="round"/>
  <g>
  <polyline points="153,55 160,47.5 167,55" fill="none" stroke="#e8e8ea" stroke-width="2.4" stroke-linecap="round" stroke-linejoin="round"/><polyline points="330.5,55 337.5,47.5 344.5,55" fill="none" stroke="#e8e8ea" stroke-width="2.4" stroke-linecap="round" stroke-linejoin="round"/><polyline points="1005,55 1012,47.5 1019,55" fill="none" stroke="#e8e8ea" stroke-width="2.4" stroke-linecap="round" stroke-linejoin="round"/><polyline points="1183,55 1190,47.5 1197,55" fill="none" stroke="#e8e8ea" stroke-width="2.4" stroke-linecap="round" stroke-linejoin="round"/><polyline points="1397,55 1404,47.5 1411,55" fill="none" stroke="#e8e8ea" stroke-width="2.4" stroke-linecap="round" stroke-linejoin="round"/><polyline points="1575,55 1582,47.5 1589,55" fill="none" stroke="#e8e8ea" stroke-width="2.4" stroke-linecap="round" stroke-linejoin="round"/><polyline points="2501,55 2508,47.5 2515,55" fill="none" stroke="#e8e8ea" stroke-width="2.4" stroke-linecap="round" stroke-linejoin="round"/>
  </g>
  <text x="950" y="57.6" font-family="Liberation Sans" font-size="24" fill="#bdbdc0">61</text>
</svg>
<div class="lbl" style="left:95px">Звук</div>
<div class="lbl" style="left:273.5px">Видео</div>
<div class="lbl" style="left:920px">Участники</div>
<div class="lbl" style="left:1125.5px">Чат</div>
<div class="lbl" style="left:1321px">Отреагировать</div>
<div class="lbl" style="left:1517px">Поделиться</div>
<div class="lbl" style="left:1789.6px">Инструменты организатора</div>
<div class="lbl" style="left:2161px">Информация о конференции</div>
<div class="lbl" style="left:2440.5px">Приложения</div>
<div class="lbl" style="left:2641.4px">Дополнительно</div>
<div class="lbl" style="left:3270.5px">Завершить</div>

<div id="winb" class="a"></div>

<div class="a" style="left:252.6px;top:1932.5px;width:2854.4px;height:157px;border-radius:38px;background:linear-gradient(90deg,#7662cc 0%,#7762d0 30%,#8a5ee0 45%,#a05ce8 60%,#a85ce8 75%,#a45ce8 88%,#9660f2 100%);box-shadow:inset 0 0 0 1.5px rgba(255,255,255,0.22)"></div>
<svg style="left:0;top:0" width="3360" height="2100">
<defs>
  <clipPath id="dclip"><rect width="103" height="103" rx="23"/></clipPath>
  <linearGradient id="fL" x1="0" y1="0" x2="0" y2="1"><stop offset="0" stop-color="#62c6f8"/><stop offset="1" stop-color="#2f6eea"/></linearGradient>
  <linearGradient id="fR" x1="0" y1="0" x2="0" y2="1"><stop offset="0" stop-color="#f2f2f4"/><stop offset="1" stop-color="#d6dce4"/></linearGradient>
  <linearGradient id="safB" x1="0" y1="0" x2="0" y2="1"><stop offset="0" stop-color="#3aa8f8"/><stop offset="1" stop-color="#1a6ee0"/></linearGradient>
  <linearGradient id="notesY" x1="0" y1="0" x2="0" y2="1"><stop offset="0" stop-color="#fcd94a"/><stop offset="1" stop-color="#f6c22a"/></linearGradient>
  <linearGradient id="musR" x1="0" y1="0" x2="0" y2="1"><stop offset="0" stop-color="#f45c78"/><stop offset="1" stop-color="#e8303e"/></linearGradient>
  <linearGradient id="appB" x1="0" y1="0" x2="0" y2="1"><stop offset="0" stop-color="#22b4f6"/><stop offset="1" stop-color="#1c62e8"/></linearGradient>
  <linearGradient id="tgB" x1="0" y1="0" x2="0" y2="1"><stop offset="0" stop-color="#3ab0ec"/><stop offset="1" stop-color="#1e90d2"/></linearGradient>
  <linearGradient id="zoomB" x1="0" y1="0" x2="0" y2="1"><stop offset="0" stop-color="#2a62f2"/><stop offset="1" stop-color="#1a48d6"/></linearGradient>
  <linearGradient id="setG" x1="0" y1="0" x2="0" y2="1"><stop offset="0" stop-color="#c8c8ca"/><stop offset="1" stop-color="#8a8a8c"/></linearGradient>
  <linearGradient id="prevS" x1="0" y1="0" x2="0" y2="1"><stop offset="0" stop-color="#9cc0ee"/><stop offset="1" stop-color="#c8dcf4"/></linearGradient>
</defs>
<g transform="translate(274.4,1954)"><g clip-path="url(#dclip)"><rect width="103" height="103" fill="url(#fR)"/>
<path d="M0 0 L56 0 Q44 28 42 62 L54 62 Q53 85 57 103 L0 103Z" fill="url(#fL)"/>
<rect x="27" y="29" width="4" height="11" rx="2" fill="#1a2a3a"/><rect x="76" y="29" width="4" height="11" rx="2" fill="#1a2a3a"/>
<path d="M20 68 Q52 92 85 68" fill="none" stroke="#1a2a3a" stroke-width="3.4" stroke-linecap="round"/></g></g>
<g transform="translate(410.6,1954)"><g clip-path="url(#dclip)"><rect width="103" height="103" fill="#d6ccee"/><rect x="16" y="17" width="19" height="18" rx="5" fill="#5fd35a"/><rect x="41" y="17" width="19" height="18" rx="5" fill="#f6b73c"/><rect x="66" y="17" width="19" height="18" rx="5" fill="#f08a2e"/><rect x="16" y="42" width="19" height="18" rx="5" fill="#e0382e"/><rect x="41" y="42" width="19" height="18" rx="5" fill="#a8acb0"/><rect x="66" y="42" width="19" height="18" rx="5" fill="#f0506a"/><rect x="16" y="67" width="19" height="18" rx="5" fill="#9b52e0"/><rect x="41" y="67" width="19" height="18" rx="5" fill="#2e8cf0"/><rect x="66" y="67" width="19" height="18" rx="5" fill="#4ed0a0"/></g></g>
<g transform="translate(546.7,1954)"><g clip-path="url(#dclip)"><rect width="103" height="103" fill="#f4f4f6"/>
<circle cx="51.5" cy="51.5" r="44" fill="url(#safB)"/>
<circle cx="51.5" cy="51.5" r="38" fill="none" stroke="#fff" stroke-width="4" stroke-dasharray="1 3" opacity="0.85"/>
<path d="M83 22 L56 56 L47 47Z" fill="#ff3b30"/><path d="M20 81 L47 47 L56 56Z" fill="#f4f4f4"/></g></g>
<g transform="translate(682.8,1954)"><g clip-path="url(#dclip)"><rect width="103" height="103" fill="#f4f4f6"/>
<path d="M51.5 51.5 L51.5 7.5 A44 44 0 0 1 89.6 29.5Z" fill="#e33b2e"/>
<path d="M51.5 7.5 A44 44 0 0 0 13.4 29.5 L32.5 62.5 L51.5 51.5Z" fill="#e33b2e"/>
<path d="M13.4 29.5 A44 44 0 0 0 51.5 95.5 L70.5 62.5 L51.5 51.5 L32.5 62.5Z" fill="#2ea24e"/>
<path d="M89.6 29.5 A44 44 0 0 1 51.5 95.5 L70.5 62.5 L51.5 51.5Z" fill="#f8c22c"/>
<circle cx="51.5" cy="51.5" r="20" fill="#fff"/><circle cx="51.5" cy="51.5" r="15.5" fill="#3b7ae8"/></g></g>
<g transform="translate(819,1954)"><g clip-path="url(#dclip)"><rect width="103" height="103" fill="#f8f8fa"/><ellipse cx="51.5" cy="29" rx="15" ry="21" fill="#f29a30" opacity="0.8" transform="rotate(0 51.5 51.5)"/><ellipse cx="51.5" cy="29" rx="15" ry="21" fill="#f4d030" opacity="0.8" transform="rotate(45 51.5 51.5)"/><ellipse cx="51.5" cy="29" rx="15" ry="21" fill="#8cc83c" opacity="0.8" transform="rotate(90 51.5 51.5)"/><ellipse cx="51.5" cy="29" rx="15" ry="21" fill="#3cb878" opacity="0.8" transform="rotate(135 51.5 51.5)"/><ellipse cx="51.5" cy="29" rx="15" ry="21" fill="#3a9ae0" opacity="0.8" transform="rotate(180 51.5 51.5)"/><ellipse cx="51.5" cy="29" rx="15" ry="21" fill="#6a70d0" opacity="0.8" transform="rotate(225 51.5 51.5)"/><ellipse cx="51.5" cy="29" rx="15" ry="21" fill="#b060b8" opacity="0.8" transform="rotate(270 51.5 51.5)"/><ellipse cx="51.5" cy="29" rx="15" ry="21" fill="#e84a4a" opacity="0.8" transform="rotate(315 51.5 51.5)"/><circle cx="51.5" cy="51.5" r="1.6" fill="#fff"/></g></g>
<g transform="translate(955,1954)"><g clip-path="url(#dclip)"><rect width="103" height="103" fill="#f6f6f6"/>
<rect width="103" height="32" fill="#e8473e"/>
<text x="51.5" y="25" font-family="Liberation Sans" font-weight="700" font-size="20" fill="#fff" text-anchor="middle">ЖОВТ.</text>
<text x="51.5" y="88" font-family="Liberation Sans" font-size="64" fill="#2a2a2a" text-anchor="middle">7</text></g></g>
<g transform="translate(1091,1954)"><g clip-path="url(#dclip)"><rect width="103" height="103" fill="#f4f2ee"/>
<rect width="103" height="25" fill="url(#notesY)"/>
<line x1="0" y1="30" x2="103" y2="30" stroke="#c8c4be" stroke-width="1.2" stroke-dasharray="2 2"/>
<line x1="0" y1="51" x2="103" y2="51" stroke="#d0ccc6" stroke-width="1.2"/>
<line x1="0" y1="77" x2="103" y2="77" stroke="#d0ccc6" stroke-width="1.2"/></g></g>
<g transform="translate(1227,1954)"><g clip-path="url(#dclip)"><rect width="103" height="103" fill="#fafafa"/>
<circle cx="41" cy="62" r="28" fill="#ee7a4a"/>
<rect x="33" y="13" width="56" height="56" rx="8" fill="#5cc4f2" opacity="0.92"/>
<path d="M18 67 Q28 38 38 42 Q46 46 48 56 Q54 40 62 43 Q70 48 73 56 Q82 50 92 47" fill="none" stroke="#143a62" stroke-width="4.5" stroke-linecap="round"/>
</g></g>
<g transform="translate(1363.5,1954)"><g clip-path="url(#dclip)"><rect width="103" height="103" fill="url(#musR)"/>
<path d="M38 24 L76 16 L76 64 Q76 74 66 76 Q56 78 55 70 Q55 62 66 60 L70 59 L70 30 L44 35 L44 72 Q44 82 34 84 Q24 86 23 78 Q23 70 34 68 L38 67Z" fill="#fff"/></g></g>
<g transform="translate(1498.7,1954)"><g clip-path="url(#dclip)"><rect width="103" height="103" fill="url(#appB)"/>
<g stroke="#fff" stroke-width="7" stroke-linecap="round"><path d="M46 20 L68 60 M57 20 L32 64 M24 62 L80 62 M70 66 L77 78 M34 68 L28 78"/></g></g></g>
<g transform="translate(1634.8,1954)"><g clip-path="url(#dclip)"><rect width="103" height="103" fill="#7360f2"/>
<path d="M51 14 Q86 14 88 42 Q88 72 58 74 L46 74 L36 86 L36 73 Q15 68 15 42 Q16 14 51 14Z" fill="none" stroke="#fff" stroke-width="6"/>
<path d="M36 34 Q34 42 42 52 Q52 62 60 60 Q64 58 62 54 L56 50 L52 53 Q46 50 43 44 L46 40 L42 34 Q38 32 36 34Z" fill="#fff"/>
<path d="M52 30 Q62 31 63 42 M53 23 Q70 25 71 43" fill="none" stroke="#fff" stroke-width="3" stroke-linecap="round"/></g></g>
<g transform="translate(1771,1954)"><g clip-path="url(#dclip)"><rect width="103" height="103" fill="#f4f4f6"/>
<circle cx="51.5" cy="51.5" r="44" fill="url(#tgB)"/>
<path d="M22 50 L76 30 Q80 29 79 33 L70 74 Q69 78 65 76 L50 65 L43 72 Q41 73 41 70 L42 60 L68 38 L37 56 L24 52 Q20 51 22 50Z" fill="#fff"/></g></g>
<g transform="translate(1907,1954)"><g clip-path="url(#dclip)"><rect width="103" height="103" fill="url(#zoomB)"/>
<text x="51.5" y="59" font-family="Liberation Sans" font-weight="700" font-size="25" fill="#fff" text-anchor="middle" letter-spacing="-0.5">zoom</text></g></g>
<g transform="translate(2043,1954)"><g clip-path="url(#dclip)"><rect width="103" height="103" fill="#fafafa"/>
<path d="M51.5 10 L84 28 L84 70 L64 81 L64 95 L56 86 L51.5 88 L19 70 L19 28Z" fill="#0f2b46"/>
<g stroke="#fff" stroke-width="3.5"><line x1="40" y1="40" x2="63" y2="51"/><line x1="40" y1="64" x2="63" y2="51"/></g>
<circle cx="40" cy="39" r="6" fill="#fff"/><circle cx="64" cy="51" r="6" fill="#fff"/><circle cx="40" cy="64" r="6" fill="#fff"/></g></g>
<g transform="translate(2179,1954)"><g clip-path="url(#dclip)"><rect width="103" height="103" fill="url(#setG)"/>
<circle cx="51.5" cy="51.5" r="42" fill="#4a4a4c"/>
<circle cx="51.5" cy="51.5" r="38" fill="none" stroke="#d0d0d2" stroke-width="7" stroke-dasharray="3 3"/>
<circle cx="51.5" cy="51.5" r="31" fill="#8a8a8c" stroke="#3a3a3c" stroke-width="3"/>
<circle cx="51.5" cy="51.5" r="22" fill="none" stroke="#3a3a3c" stroke-width="4"/>
<g stroke="#3a3a3c" stroke-width="5"><line x1="51.5" y1="51.5" x2="51.5" y2="24"/><line x1="51.5" y1="51.5" x2="76" y2="65"/><line x1="51.5" y1="51.5" x2="27" y2="65"/></g>
<circle cx="51.5" cy="51.5" r="6" fill="#555"/></g></g>
<g transform="translate(2376.6,1954)"><g clip-path="url(#dclip)"><rect width="103" height="103" fill="#fafafa"/>
<rect x="27" y="17" width="60" height="68" rx="5" fill="#21a366"/>
<rect x="55" y="17" width="32" height="17" fill="#33c481"/><rect x="27" y="34" width="60" height="17" fill="#21a366"/><rect x="27" y="51" width="60" height="17" fill="#107c41"/><rect x="27" y="68" width="60" height="17" fill="#185c37"/>
<rect x="9" y="33" width="38" height="38" rx="4" fill="#107c41"/>
<text x="28" y="62" font-family="Liberation Sans" font-weight="700" font-size="26" fill="#fff" text-anchor="middle">X</text></g></g>
<g transform="translate(2513,1954)"><g clip-path="url(#dclip)"><rect width="103" height="103" fill="#fafafa"/>
<rect x="27" y="17" width="60" height="68" rx="5" fill="#41a5ee"/>
<rect x="27" y="34" width="60" height="17" fill="#2b7cd3"/><rect x="27" y="51" width="60" height="17" fill="#185abd"/><rect x="27" y="68" width="60" height="17" fill="#103f91"/>
<rect x="9" y="33" width="38" height="38" rx="4" fill="#185abd"/>
<text x="28" y="62" font-family="Liberation Sans" font-weight="700" font-size="24" fill="#fff" text-anchor="middle">W</text></g></g>
<g transform="translate(2649,1954)"><g>
<rect width="103" height="103" rx="23" fill="#f4f4f6"/>
<rect x="8" y="8" width="87" height="87" rx="16" fill="url(#prevS)"/>
<path d="M8 50 L95 48 L95 79 Q95 95 79 95 L24 95 Q8 95 8 79Z" fill="#2a4a78"/>
<path d="M8 62 Q30 56 50 70 L50 95 L24 95 Q8 95 8 79Z" fill="#e8eef4" opacity="0.75"/>
<path d="M8 84 Q30 78 56 95 L24 95 Q12 95 8 88Z" fill="#6a5a48"/>
<rect x="52" y="51" width="46" height="14" rx="6" fill="#1a1a1a"/>
<path d="M54 65 L96 65 L102 100 Q77 110 50 100Z" fill="#dfe6ec" opacity="0.95"/>
<ellipse cx="76" cy="100" rx="26" ry="6" fill="#c8d0d8"/>
</g></g>
<g transform="translate(2843,1954)"><g><rect x="18" y="-10" width="66" height="40" fill="#f0f0f0"/>
<rect x="14" y="-12" width="4" height="40" fill="#222"/>
<rect x="10" y="8" width="98" height="15" rx="3" fill="#d8d2c4"/>
<rect x="0" y="18" width="108" height="60" rx="3" fill="#eceae6"/>
<rect x="0" y="18" width="5" height="60" fill="#1a1a1a"/>
<rect x="26" y="40" width="60" height="26" fill="none" stroke="#444" stroke-width="1.2"/>
<text x="56" y="48" font-family="Liberation Sans" font-weight="700" font-size="6" fill="#222" text-anchor="middle">CASE STUDY</text>
<text x="56" y="57" font-family="Liberation Sans" font-weight="700" font-size="7" fill="#222" text-anchor="middle">RESCUE OF THE</text>
<text x="56" y="64" font-family="Liberation Sans" font-weight="700" font-size="7" fill="#222" text-anchor="middle">RESTAURANT</text></g></g>
<g transform="translate(2987.7,1954)"><g><path d="M0 6 Q46 -6 90 6 L82 98 Q44 110 10 98Z" fill="#e4e4ea" opacity="0.92"/>
<ellipse cx="45" cy="8" rx="45" ry="10" fill="#cfd0d8"/>
<path d="M10 6 Q20 -10 36 0 Q50 -12 66 -2 Q80 -10 86 6" fill="#f2f2f2"/>
<path d="M40 0 L55 -6 L60 8 Z" fill="#3a8ad8"/><path d="M62 2 L74 -4 L72 10Z" fill="#e89a3a"/></g></g>

<line x1="2331" y1="1952" x2="2331" y2="2070" stroke="#7a3ab8" stroke-width="2"/>
<line x1="2798.5" y1="1952" x2="2798.5" y2="2070" stroke="#7a3ab8" stroke-width="2"/>
<circle cx="2273" cy="1967" r="25" fill="#e8473e"/>
<text x="2273" y="1977" font-family="Liberation Sans" font-size="28" fill="#fff" text-anchor="middle">1</text>
<g fill="#0c0650">
<circle cx="326" cy="2082" r="4"/><circle cx="597.6" cy="2082" r="4"/><circle cx="733.7" cy="2082" r="4"/><circle cx="1141.6" cy="2082" r="4"/><circle cx="1685" cy="2082" r="4"/><circle cx="1821" cy="2082" r="4"/><circle cx="1957.5" cy="2082" r="4"/><circle cx="2428" cy="2082" r="4"/><circle cx="2563.7" cy="2082" r="4"/><circle cx="2699.5" cy="2082" r="4"/>
</g>
</svg>

</body></html>
